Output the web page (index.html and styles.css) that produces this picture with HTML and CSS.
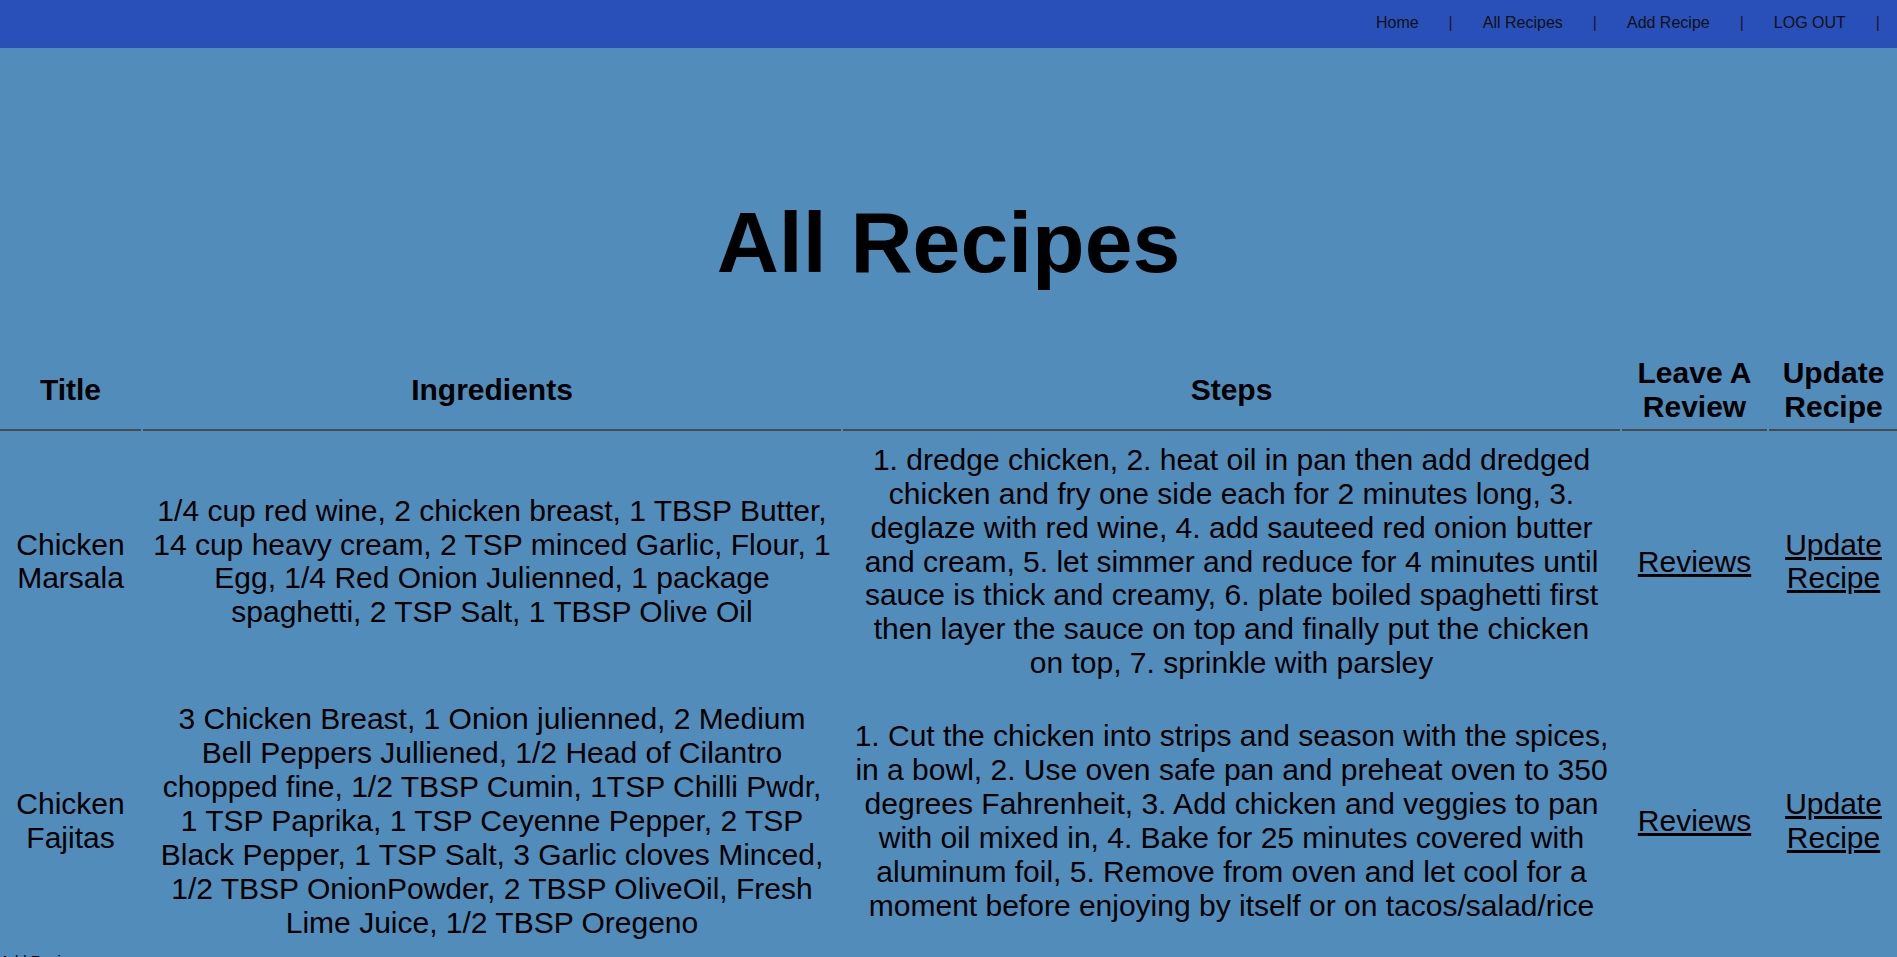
FILE: index.html
```html
<!DOCTYPE html>
<html lang="en">
<head>
<meta charset="utf-8">
<title>All Recipes</title>
<link rel="stylesheet" href="styles.css">
</head>
<body>
<nav class="topnav">
  <a class="nav-link" href="#">Home</a>
  <span class="nav-sep">|</span>
  <a class="nav-link" href="#">All Recipes</a>
  <span class="nav-sep">|</span>
  <a class="nav-link" href="#">Add Recipe</a>
  <span class="nav-sep">|</span>
  <a class="nav-link" href="#">LOG OUT</a>
  <span class="nav-sep">|</span>
</nav>
<main class="page">
  <h1 class="page-title">All Recipes</h1>
  <table class="recipes">
    <colgroup>
      <col class="c-title">
      <col class="c-ing">
      <col class="c-steps">
      <col class="c-review">
      <col class="c-update">
    </colgroup>
    <thead>
      <tr>
        <th>Title</th>
        <th>Ingredients</th>
        <th>Steps</th>
        <th>Leave A Review</th>
        <th>Update Recipe</th>
      </tr>
    </thead>
    <tbody>
      <tr>
        <td>Chicken Marsala</td>
        <td>1/4 cup red wine, 2 chicken breast, 1 TBSP Butter, 14 cup heavy cream, 2 TSP minced Garlic, Flour, 1 Egg, 1/4 Red Onion Julienned, 1 package spaghetti, 2 TSP Salt, 1 TBSP Olive Oil</td>
        <td>1. dredge chicken, 2. heat oil in pan then add dredged chicken and fry one side each for 2 minutes long, 3. deglaze with red wine, 4. add sauteed red onion butter and cream, 5. let simmer and reduce for 4 minutes until sauce is thick and creamy, 6. plate boiled spaghetti first then layer the sauce on top and finally put the chicken on top, 7. sprinkle with parsley</td>
        <td><a class="cell-link" href="#">Reviews</a></td>
        <td><a class="cell-link" href="#">Update Recipe</a></td>
      </tr>
      <tr>
        <td>Chicken Fajitas</td>
        <td>3 Chicken Breast, 1 Onion julienned, 2 Medium Bell Peppers Julliened, 1/2 Head of Cilantro chopped fine, 1/2 TBSP Cumin, 1TSP Chilli Pwdr, 1 TSP Paprika, 1 TSP Ceyenne Pepper, 2 TSP Black Pepper, 1 TSP Salt, 3 Garlic cloves Minced, 1/2 TBSP OnionPowder, 2 TBSP OliveOil, Fresh Lime Juice, 1/2 TBSP Oregeno</td>
        <td>1. Cut the chicken into strips and season with the spices, in a bowl, 2. Use oven safe pan and preheat oven to 350 degrees Fahrenheit, 3. Add chicken and veggies to pan with oil mixed in, 4. Bake for 25 minutes covered with aluminum foil, 5. Remove from oven and let cool for a moment before enjoying by itself or on tacos/salad/rice</td>
        <td><a class="cell-link" href="#">Reviews</a></td>
        <td><a class="cell-link" href="#">Update Recipe</a></td>
      </tr>
    </tbody>
  </table>
  <p class="footer-link">Add Recipe</p>
</main>
</body>
</html>
```

FILE: styles.css
```css
html, body {
  margin: 0;
  padding: 0;
}
html::-webkit-scrollbar { display: none; }
body {
  background: #528cbb;
  font-family: "Liberation Sans", Arial, sans-serif;
  color: #000;
  overflow-x: hidden;
}
.topnav {
  height: 48px;
  box-sizing: border-box;
  padding: 0 17px 2px 0;
  background: #2850b8;
  display: flex;
  justify-content: flex-end;
  align-items: center;
  gap: 30px;
  font-size: 16px;
}
.nav-link {
  color: #111;
  text-decoration: none;
}
.nav-sep {
  color: #2a0f25;
}
.page-title {
  font-size: 86px;
  line-height: 99px;
  font-weight: bold;
  text-align: center;
  margin: 145px 0 57px;
}
.recipes {
  table-layout: fixed;
  border-collapse: separate;
  border-spacing: 2px;
  margin-left: -2px;
  width: 1902px;
  font-size: 30px;
  line-height: 33.9px;
}
.c-title { width: 141px; }
.c-ing { width: 698px; }
.c-steps { width: 777px; }
.c-review { width: 145px; }
.c-update { width: 129px; }
.recipes th {
  font-weight: bold;
  padding: 5px 10px;
  border-bottom: 2px solid #4a4a4a;
  text-align: center;
  vertical-align: middle;
}
.recipes td {
  padding: 10px;
  text-align: center;
  vertical-align: middle;
}
.cell-link {
  color: #000;
  text-decoration: underline;
}
.footer-link {
  margin: 0;
  font-size: 15px;
  line-height: 18px;
  padding-bottom: 20px;
}
```
